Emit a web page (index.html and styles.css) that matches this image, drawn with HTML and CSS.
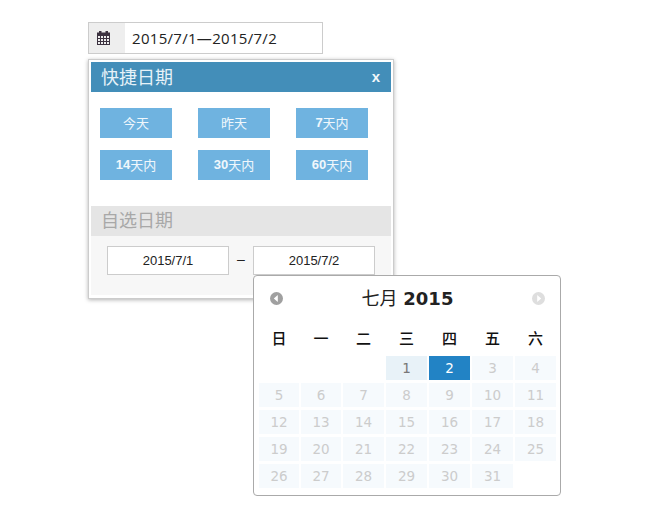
FILE: index.html
```html
<!DOCTYPE html>
<html lang="zh">
<head>
<meta charset="utf-8">
<title>日期选择</title>
<link rel="stylesheet" href="styles.css">
</head>
<body>
<div class="picker">
  <div class="range">
    <span class="range-icon">
      <svg width="13" height="14" viewBox="0 0 13 14">
        <path fill="#3c3240" d="M2 0h2.500v1.500h4V0H11v1.500h2V14H0V1.500h2zM1 5v8h11V5z"/>
        <path fill="#3c3240" d="M1 7h11v1H1zM1 10h11v1H1zM3 5h1v8H3zM6 5h1v8H6zM9 5h1v8H9z"/>
      </svg>
    </span>
    <span class="range-value">2015/7/1—2015/7/2</span>
  </div>
  <div class="panel">
    <div class="panel-head"><span>快捷日期</span><span class="close">x</span></div>
    <div class="quick">
      <a class="quick-btn">今天</a>
      <a class="quick-btn">昨天</a>
      <a class="quick-btn"><b>7</b>天内</a>
      <a class="quick-btn"><b>14</b>天内</a>
      <a class="quick-btn"><b>30</b>天内</a>
      <a class="quick-btn"><b>60</b>天内</a>
    </div>
    <div class="custom-head">自选日期</div>
    <div class="custom">
      <input class="date-input" type="text" value="2015/7/1" readonly>
      <span class="dash">–</span>
      <input class="date-input" type="text" value="2015/7/2" readonly>
    </div>
  </div>
  <div class="calendar">
    <div class="cal-head">
      <svg class="nav" width="13" height="13" viewBox="0 0 13 13"><circle cx="6.500" cy="6.500" r="6.500" fill="#a0a0a0"/><path fill="#fff" d="M7.800 3v7L3.800 6.500z"/></svg>
      <div class="cal-title">七月 <b>2015</b></div>
      <svg class="nav" width="13" height="13" viewBox="0 0 13 13"><circle cx="6.500" cy="6.500" r="6.500" fill="#dedede"/><path fill="#fff" d="M5.200 3v7l4-3.500z"/></svg>
    </div>
    <div class="week">
      <span>日</span><span>一</span><span>二</span><span>三</span><span>四</span><span>五</span><span>六</span>
    </div>
    <div class="days">
      <span class="blank"></span><span class="blank"></span><span class="blank"></span>
      <span class="day on">1</span><span class="day sel">2</span><span class="day">3</span><span class="day">4</span>
      <span class="day">5</span><span class="day">6</span><span class="day">7</span><span class="day">8</span><span class="day">9</span><span class="day">10</span><span class="day">11</span>
      <span class="day">12</span><span class="day">13</span><span class="day">14</span><span class="day">15</span><span class="day">16</span><span class="day">17</span><span class="day">18</span>
      <span class="day">19</span><span class="day">20</span><span class="day">21</span><span class="day">22</span><span class="day">23</span><span class="day">24</span><span class="day">25</span>
      <span class="day">26</span><span class="day">27</span><span class="day">28</span><span class="day">29</span><span class="day">30</span><span class="day">31</span>
    </div>
  </div>
</div>
</body>
</html>
```
FILE: styles.css
```css
* { box-sizing: border-box; }
html, body { margin: 0; background: #fff; }
body { padding: 22px 0 0 88px; height: 520px; overflow: hidden; font-family: "Liberation Sans", "Noto Sans CJK SC", sans-serif; }
.picker { position: relative; width: 306px; }
.range { display: flex; width: 235px; height: 32px; border: 1px solid #ccc; }
.range-icon { width: 36px; background: #eee; display: flex; align-items: center; padding-left: 8px; }
.range-value { padding-left: 7px; font: 15px/30px "Open Sans", "Noto Sans CJK SC", sans-serif; letter-spacing: .3px; color: #222; }
.panel { margin-top: 5px; width: 306px; height: 240px; padding: 2px; border: 1px solid #ccc; box-shadow: 0 1px 4px rgba(0,0,0,.3); background: #fff; }
.panel-head { display: flex; justify-content: space-between; align-items: center; height: 30px; padding: 0 11px 2px 10px; background: #438eb9; color: #e6f2f8; font-size: 18px; }
.close { font-weight: bold; font-size: 15px; color: #f2f7fa; }
.quick { display: grid; grid-template-columns: repeat(3, 72px); grid-auto-rows: 30px; column-gap: 26px; row-gap: 12px; padding: 16px 0 0 9px; height: 114px; }
.quick-btn { display: flex; align-items: center; justify-content: center; padding-bottom: 2px; background: #6fb3e0; color: #f0f7fc; font-size: 13px; }
.custom-head { height: 30px; line-height: 30px; padding-left: 10px; background: #e5e5e5; color: #a8a8a8; font-size: 18px; }
.custom { display: flex; align-items: flex-start; height: 59px; padding: 10px 0 0 16px; background: #f7f7f7; }
.date-input { width: 122px; height: 29px; padding: 0; border: 1px solid #ccc; background: #fff; color: #222; text-align: center; font: 13px "Liberation Sans", sans-serif; outline: none; }
.dash { width: 24px; text-align: center; line-height: 26px; font-size: 14px; color: #222; }
.calendar { position: absolute; left: 165px; top: 253px; width: 308px; height: 221px; padding: 0 4px 0 5px; background: #fff; border: 1px solid #aaa; border-radius: 4px; font-family: "DejaVu Sans", "Noto Sans CJK SC", sans-serif; }
.cal-head { display: flex; align-items: center; justify-content: space-between; height: 45px; padding: 0 11px; }
.nav { flex: none; }
.cal-title { font-size: 18px; line-height: 24px; color: #222; }
.cal-title b { font-weight: bold; }
.week { display: grid; grid-template-columns: 40px 40px repeat(5, 41px); column-gap: 2px; height: 35px; padding-bottom: 3px; align-items: center; text-align: center; font-size: 15px; font-weight: 500; color: #111; }
.days { display: grid; grid-template-columns: 40px 40px repeat(5, 41px); grid-auto-rows: 24px; gap: 3px 2px; }
.day { background: #f6fafd; color: #ccc; font-size: 13.500px; line-height: 25px; text-align: center; }
.day.on { background: #e8f2f8; color: #777; }
.day.sel { background: #2283c5; color: #fff; }
```
